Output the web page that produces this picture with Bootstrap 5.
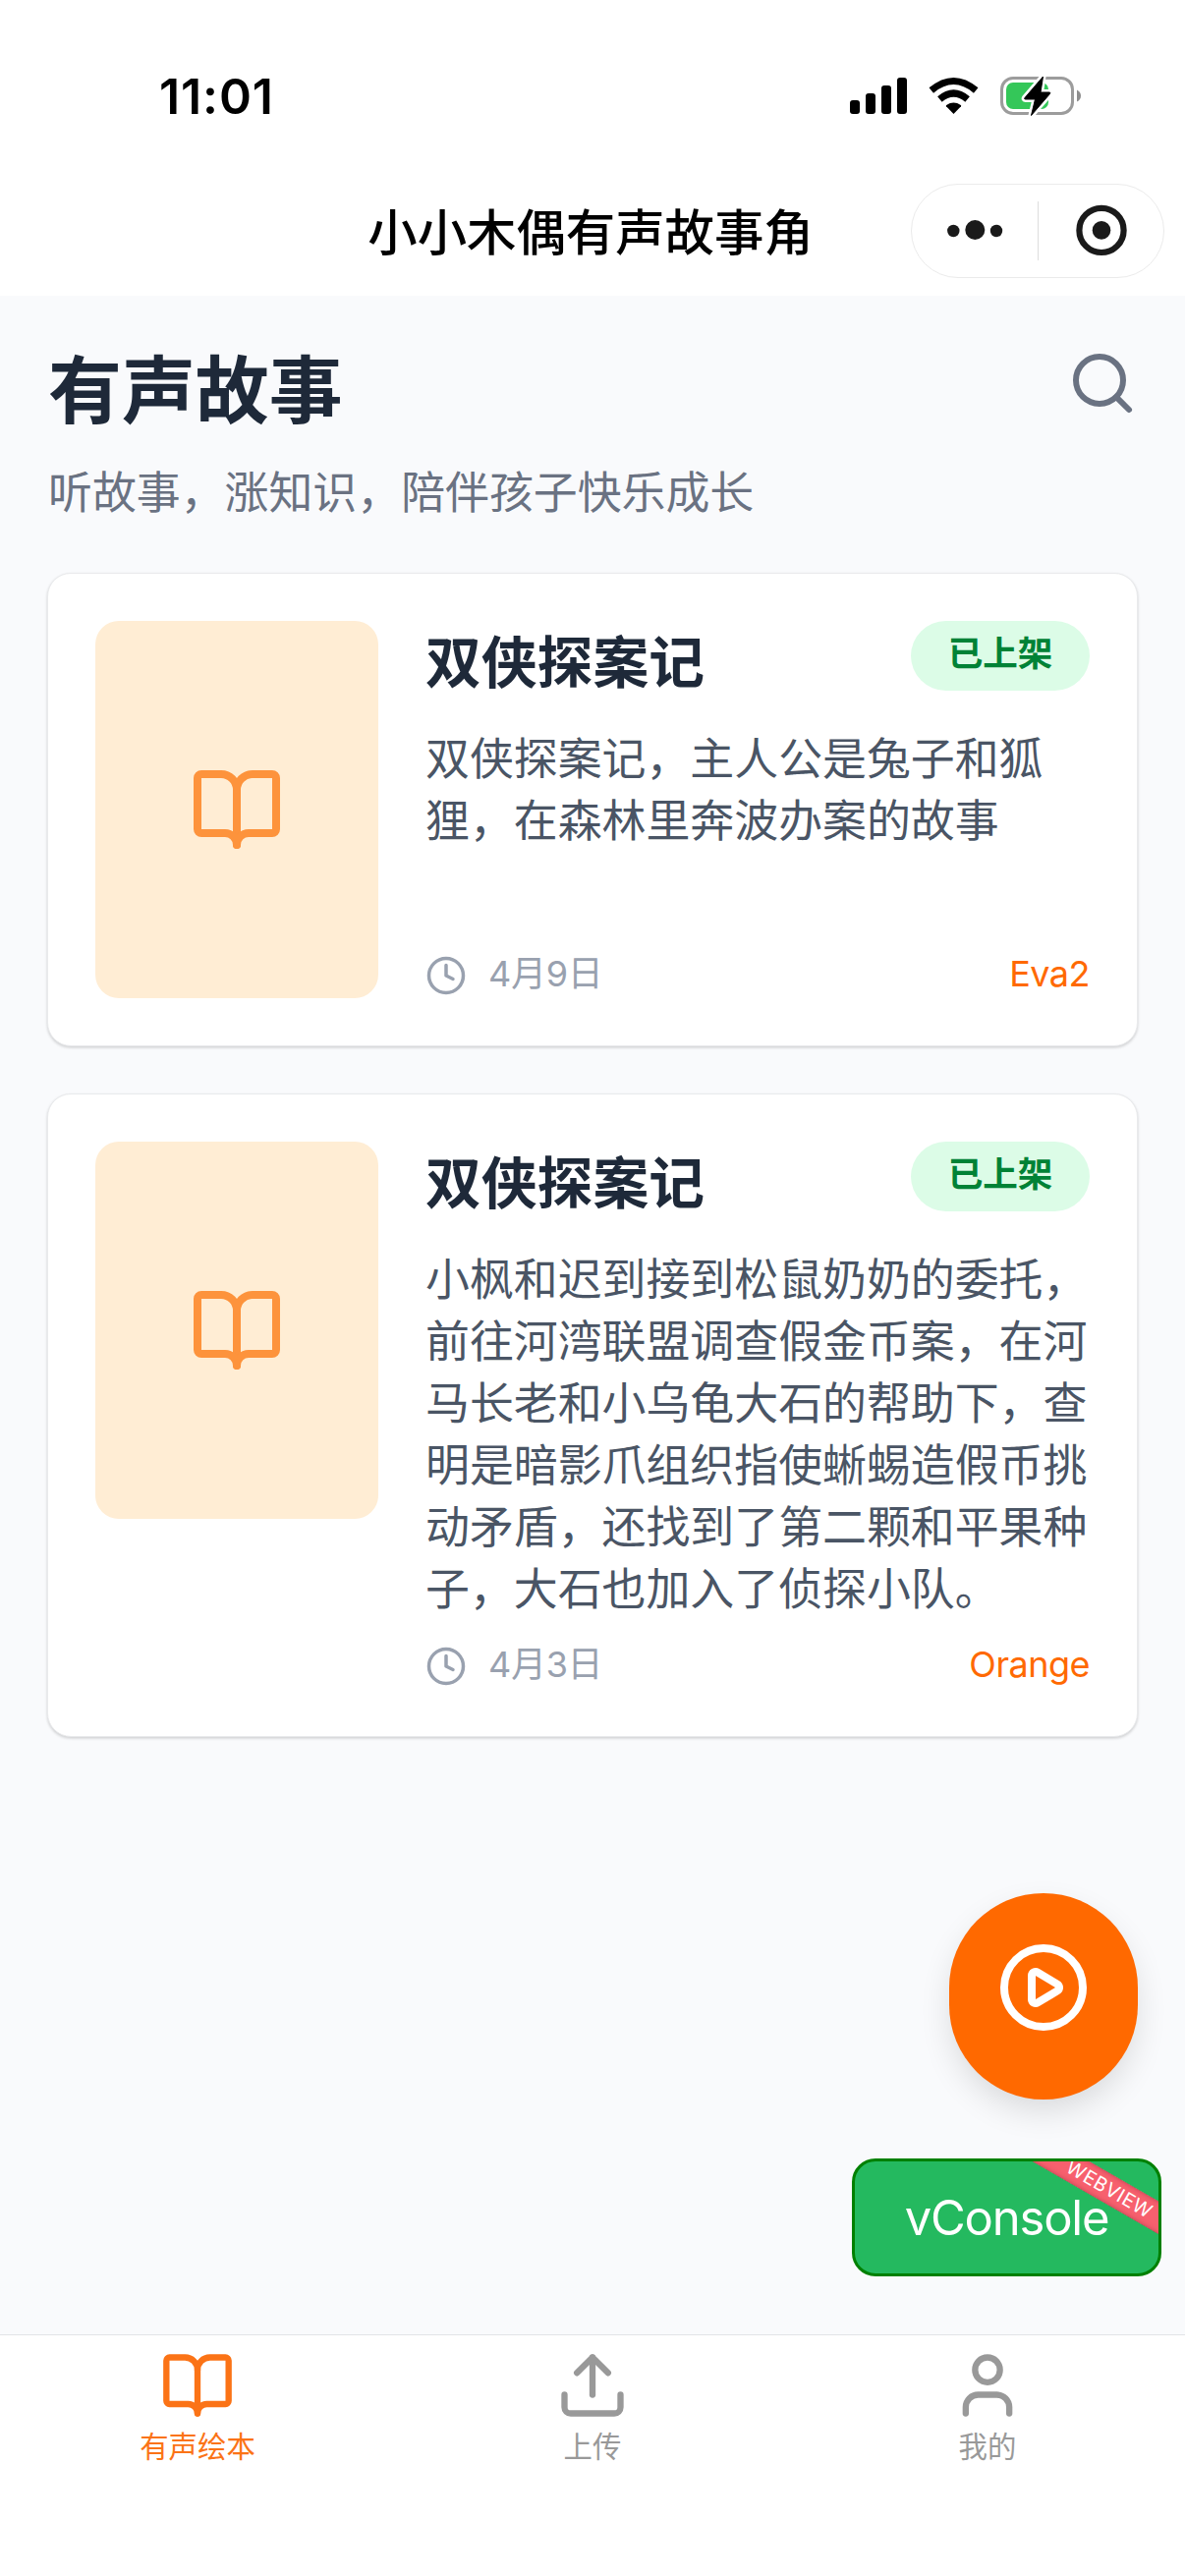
<!DOCTYPE html>
<html lang="zh-CN">
<head>
<meta charset="utf-8">
<meta name="viewport" content="width=device-width, initial-scale=1">
<title>小小木偶有声故事角</title>
<link href="https://cdn.jsdelivr.net/npm/bootstrap@5.3.0/dist/css/bootstrap.min.css" rel="stylesheet">
<style>
  body { font-family: Inter, "Noto Sans CJK SC", sans-serif; background: #f9fafc; color: #1e2939; }
  .phone { height: 2622px; overflow: hidden; }
  .ico { fill: none; stroke: currentColor; stroke-width: 2; stroke-linecap: round; stroke-linejoin: round; display: block; flex: none; }

  .app-head { height: 301px; background: #fff; color: #000; padding-top: 68px; }
  .status-row { height: 60px; padding-left: 162px; padding-right: 105px; }
  .clock-text { font-size: 50px; font-weight: 600; line-height: 60px; letter-spacing: .9px; }
  .title-row { margin-top: 59px; height: 96px; padding-right: 21px; }
  .title-row .spacer { width: 279px; }
  .app-title { font-size: 50.4px; font-weight: 500; line-height: 96px; padding: 3px 4px 0 0; }
  .capsule { width: 258px; height: 96px; border: 1px solid #ebebeb; border-radius: 48px; }

  .content-area { height: 2075px; padding: 51px 48px 0; }
  .page-title { font-size: 74.9px; font-weight: 700; line-height: 90px; padding: 1px 0 0 1px; }
  .search-ico { color: #6a7282; margin-top: 2px; }
  .page-sub { font-size: 44.9px; line-height: 64px; color: #6a7282; margin-top: 27px; padding-left: 1px; }

  .story-list { margin-top: 49px; gap: 48px; }
  .story { border: 1px solid #e9eaec; border-radius: 24px; padding: 48px; gap: 48px; --bs-card-bg: #fff;
           box-shadow: 0 1px 3px rgba(0,0,0,.1), 0 2px 3px rgba(0,0,0,.08); }
  .cover { width: 288px; height: 384px; border-radius: 24px; background: #ffedd4; color: #fd933c; flex: none; }
  .story-name { font-size: 56.8px; font-weight: 700; line-height: 86px; }
  .state { width: 182px; height: 71px; border-radius: 36px; background: #dcfce7; color: #008236; font-size: 35.6px; font-weight: 700; line-height: 68px; padding: 0; }
  .story-text { font-size: 44.9px; line-height: 63px; color: #4a5565; margin-top: 24px; }
  .foot { padding-top: 23px; font-size: 36px; line-height: 46px; }
  .foot .when { color: #99a1af; gap: 22px; letter-spacing: -.3px; }
  .foot .when span { line-height: 43px; padding-bottom: 3px; }
  .foot .who { color: #ff6900; line-height: 43px; letter-spacing: -.5px; }

  .fab { right: 48px; top: 1927px; width: 192px; height: 210px; padding: 48px; border-radius: 96px; background: #ff6900; color: #fff;
         box-shadow: 0 14px 34px -4px rgba(0,0,0,.14); }
  .vc-switch { right: 24px; top: 2197px; width: 315px; height: 120px; border: 3px solid #008000; border-radius: 24px; background: #24b95f;
         color: #fff; font-size: 49px; line-height: 116px; letter-spacing: -1.2px; }
  .ribbon { left: 159px; top: 14px; width: 200px; height: 29px; transform: rotate(30deg); background: #f7606e; font-size: 19.5px; line-height: 29px; letter-spacing: .6px;
         box-shadow: inset 0 0 5px rgba(120,30,50,.5); }

  .tabs { height: 246px; background: #fff; border-top: 1px solid #e2e4e7; padding-top: 13px; color: #999; }
  .tab { font-size: 29.4px; line-height: 44px; gap: 3px; }
  .tab.on { color: #fb7316; }
</style>
</head>
<body>
<div class="phone position-relative d-flex flex-column">

  <header class="app-head">
    <div class="status-row d-flex align-items-center justify-content-between">
      <span class="clock-text">11:01</span>
      <svg width="236" height="44" viewBox="865 76 236 44">
        <g fill="#000">
          <rect x="865" y="102" width="10" height="14" rx="3"/><rect x="881" y="95" width="10" height="21" rx="3"/>
          <rect x="897" y="87" width="10" height="29" rx="3"/><rect x="913" y="79" width="10" height="37" rx="3"/>
          <path d="M970.5 116 963 108.2Q962.5 107.600 963.2 107Q970.500 102.200 977.800 107Q978.500 107.600 978 108.200Z"/>
        </g>
        <g fill="none" stroke="#000" stroke-width="7">
          <path d="M947.800 92Q970.500 73 993.200 92"/><path d="M956.400 101Q970.500 89 984.600 101"/>
        </g>
        <rect x="1019.500" y="79.500" width="72" height="36" rx="11.500" fill="none" stroke="#9c9c9c" stroke-width="3"/>
        <path d="M1096 91.500Q1100 93.500 1100 97.500T1096 103.500Z" fill="#8e8e8e"/>
        <rect x="1024" y="84" width="43" height="27" rx="7" fill="#34c759"/>
        <path d="M1061.500 78 1043 99.500Q1042 101 1043.500 101H1053.500L1049.500 117.500 1068.500 95.500Q1069.500 94 1068 94H1059Z" fill="#fff" stroke="#fff" stroke-width="6" stroke-linejoin="round"/>
        <path d="M1061.500 78 1043 99.500Q1042 101 1043.500 101H1053.500L1049.500 117.500 1068.500 95.500Q1069.500 94 1068 94H1059Z" fill="#000" stroke="#000" stroke-linejoin="round"/>
      </svg>
    </div>
    <div class="title-row d-flex align-items-center justify-content-between">
      <span class="spacer"></span>
      <span class="app-title flex-fill text-center">小小木偶有声故事角</span>
      <div class="capsule">
        <svg class="d-block" width="256" height="94" viewBox="928 188 256 94" fill="#1a1a1a">
          <circle cx="970.300" cy="235" r="6.200"/><circle cx="992.300" cy="234" r="10"/><circle cx="1014" cy="235" r="6.200"/>
          <path d="M1056.500 205V265" stroke="#dedede"/>
          <circle cx="1121" cy="234.400" r="22.600" fill="none" stroke="#1a1a1a" stroke-width="6.200"/><circle cx="1121" cy="234.400" r="9.300"/>
        </svg>
      </div>
    </div>
  </header>

  <main class="content-area">
    <div class="d-flex justify-content-between">
      <h1 class="page-title m-0">有声故事</h1>
      <svg class="ico search-ico" width="72" height="72" viewBox="0 0 24 24"><circle cx="11" cy="11" r="8"/><path d="m21 21-4.300-4.300"/></svg>
    </div>
    <p class="page-sub mb-0">听故事，涨知识，陪伴孩子快乐成长</p>

    <div class="story-list d-flex flex-column">
      <article class="card story flex-row">
        <div class="cover d-flex align-items-center justify-content-center">
          <svg class="ico" width="96" height="96" viewBox="0 0 24 24"><path d="M12 7v14"/><path d="M3 18a1 1 0 0 1-1-1V4a1 1 0 0 1 1-1h5a4 4 0 0 1 4 4 4 4 0 0 1 4-4h5a1 1 0 0 1 1 1v13a1 1 0 0 1-1 1h-6a3 3 0 0 0-3 3 3 3 0 0 0-3-3z"/></svg>
        </div>
        <div class="flex-fill d-flex flex-column">
          <div class="d-flex justify-content-between align-items-start">
            <h2 class="story-name m-0">双侠探案记</h2>
            <span class="badge state">已上架</span>
          </div>
          <p class="story-text mb-0">双侠探案记，主人公是兔子和狐狸，在森林里奔波办案的故事</p>
          <div class="foot mt-auto d-flex justify-content-between">
            <span class="when d-flex align-items-center">
              <svg class="ico" width="42" height="42" viewBox="0 0 24 24"><circle cx="12" cy="12" r="10"/><path d="M12 6v6l4 2"/></svg><span>4月9日</span></span>
            <span class="who">Eva2</span>
          </div>
        </div>
      </article>

      <article class="card story flex-row">
        <div class="cover d-flex align-items-center justify-content-center">
          <svg class="ico" width="96" height="96" viewBox="0 0 24 24"><path d="M12 7v14"/><path d="M3 18a1 1 0 0 1-1-1V4a1 1 0 0 1 1-1h5a4 4 0 0 1 4 4 4 4 0 0 1 4-4h5a1 1 0 0 1 1 1v13a1 1 0 0 1-1 1h-6a3 3 0 0 0-3 3 3 3 0 0 0-3-3z"/></svg>
        </div>
        <div class="flex-fill d-flex flex-column">
          <div class="d-flex justify-content-between align-items-start">
            <h2 class="story-name m-0">双侠探案记</h2>
            <span class="badge state">已上架</span>
          </div>
          <p class="story-text mb-0">小枫和迟到接到松鼠奶奶的委托，前往河湾联盟调查假金币案，在河马长老和小乌龟大石的帮助下，查明是暗影爪组织指使蜥蜴造假币挑动矛盾，还找到了第二颗和平果种子，大石也加入了侦探小队。</p>
          <div class="foot mt-auto d-flex justify-content-between">
            <span class="when d-flex align-items-center">
              <svg class="ico" width="42" height="42" viewBox="0 0 24 24"><circle cx="12" cy="12" r="10"/><path d="M12 6v6l4 2"/></svg><span>4月3日</span></span>
            <span class="who">Orange</span>
          </div>
        </div>
      </article>
    </div>
  </main>

  <nav class="tabs row g-0">
    <div class="col-4 tab on d-flex flex-column align-items-center">
      <svg class="ico" width="76" height="76" viewBox="0 0 24 24"><path d="M12 7v14"/><path d="M3 18a1 1 0 0 1-1-1V4a1 1 0 0 1 1-1h5a4 4 0 0 1 4 4 4 4 0 0 1 4-4h5a1 1 0 0 1 1 1v13a1 1 0 0 1-1 1h-6a3 3 0 0 0-3 3 3 3 0 0 0-3-3z"/></svg>
      <span>有声绘本</span>
    </div>
    <div class="col-4 tab d-flex flex-column align-items-center">
      <svg class="ico" width="76" height="76" viewBox="0 0 24 24"><path d="M12 3v12"/><path d="m17 8-5-5-5 5"/><path d="M21 15v4a2 2 0 0 1-2 2H5a2 2 0 0 1-2-2v-4"/></svg>
      <span>上传</span>
    </div>
    <div class="col-4 tab d-flex flex-column align-items-center">
      <svg class="ico" width="76" height="76" viewBox="0 0 24 24"><path d="M19 21v-2a4 4 0 0 0-4-4H9a4 4 0 0 0-4 4v2"/><circle cx="12" cy="7" r="4"/></svg>
      <span>我的</span>
    </div>
  </nav>

  <div class="fab position-absolute">
    <svg class="ico" width="96" height="96" viewBox="0 0 24 24"><circle cx="12" cy="12" r="10"/><path d="M9 9.003a1 1 0 0 1 1.517-.859l4.997 2.997a1 1 0 0 1 0 1.718l-4.997 2.997A1 1 0 0 1 9 14.996z"/></svg>
  </div>
  <div class="vc-switch position-absolute overflow-hidden text-center">vConsole
    <span class="ribbon position-absolute text-center">WEBVIEW</span>
  </div>
</div>
<script src="https://cdn.jsdelivr.net/npm/bootstrap@5.3.0/dist/js/bootstrap.bundle.min.js"></script>
</body>
</html>
